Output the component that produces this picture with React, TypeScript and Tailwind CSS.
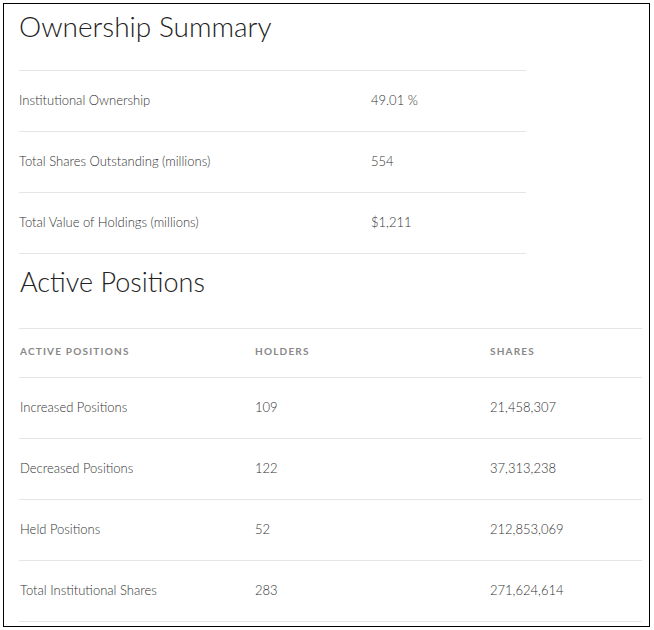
const summary = [
  { label: "Institutional Ownership", value: "49.01 %" },
  { label: "Total Shares Outstanding (millions)", value: "554" },
  { label: "Total Value of Holdings (millions)", value: "$1,211" },
];

const positions = [
  { label: "Increased Positions", holders: "109", shares: "21,458,307" },
  { label: "Decreased Positions", holders: "122", shares: "37,313,238" },
  { label: "Held Positions", holders: "52", shares: "212,853,069" },
  { label: "Total Institutional Shares", holders: "283", shares: "271,624,614" },
];

export default function App() {
  return (
    <div className="w-[654px] h-[630px] bg-white p-[3px] font-['Lato','Liberation_Sans',sans-serif]">
      <div className="h-[624px] w-[647px] border border-black pl-[15px] pt-[5px]">
        <h1 className="-mt-[3px] text-[28px] leading-[40px] font-light text-[#222]">Ownership Summary</h1>

        <div className="mt-[24px] w-[507px] border-t border-[#e5e5e5]">
          {summary.map((row) => (
            <div key={row.label} className="flex h-[61px] items-center border-b border-[#e5e5e5] text-[13px] font-light text-[#333]">
              <span className="w-[352px]">{row.label}</span>
              <span>{row.value}</span>
            </div>
          ))}
        </div>

        <h2 className="ml-[1px] mt-[11px] text-[27px] leading-[34px] font-light text-[#222]">Active Positions</h2>

        <div className="mt-[29px] w-[623px] border-t border-[#e5e5e5]">
          <div className="flex h-[49px] items-center border-b border-[#e5e5e5] pl-[1px] pb-[4px] text-[10px] font-bold uppercase tracking-[1.2px] text-[#888]">
            <span className="w-[235px]">Active Positions</span>
            <span className="w-[235px]">Holders</span>
            <span>Shares</span>
          </div>
          {positions.map((row) => (
            <div key={row.label} className="flex h-[61px] items-center border-b border-[#e5e5e5] pl-[1px] text-[13px] font-light text-[#333]">
              <span className="w-[235px]">{row.label}</span>
              <span className="w-[235px]">{row.holders}</span>
              <span>{row.shares}</span>
            </div>
          ))}
        </div>
      </div>
    </div>
  );
}
